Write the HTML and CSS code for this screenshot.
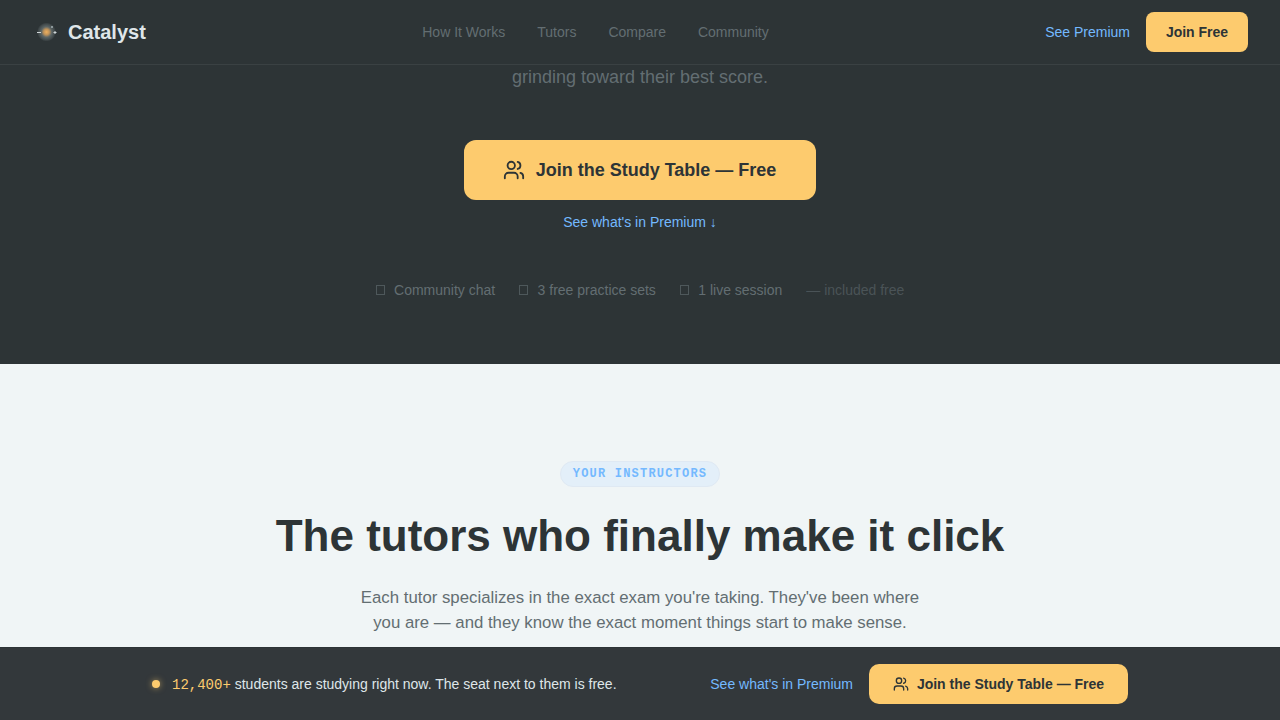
FILE: index.html
```html
<!DOCTYPE html>
<html lang="en">
<head>
  <meta charset="UTF-8">
  <title>Catalyst</title>
  <link rel="stylesheet" href="styles.css">
</head>
<body>
  <nav class="nav">
    <a class="brand" href="#">
      <svg class="brand-logo" width="22" height="22" viewBox="0 0 22 22">
        <defs>
          <radialGradient id="core">
            <stop offset="0" stop-color="#efb05e"/>
            <stop offset="0.3" stop-color="#c0935a"/>
            <stop offset="0.55" stop-color="#5d6666"/>
            <stop offset="0.85" stop-color="#41494b"/>
            <stop offset="1" stop-color="#2d3436"/>
          </radialGradient>
        </defs>
        <circle cx="10.5" cy="11" r="9.5" fill="url(#core)"/>
        <path d="M1 11.5h4M17.5 11.5h3M19 10v3" stroke="#cfd6d8" stroke-width="1" fill="none"/>
        <rect x="15" y="5" width="2" height="2" fill="#8d989b"/>
      </svg>
      <span>Catalyst</span>
    </a>
    <div class="nav-links">
      <a href="#">How It Works</a>
      <a href="#">Tutors</a>
      <a href="#">Compare</a>
      <a href="#">Community</a>
    </div>
    <div class="nav-actions">
      <a class="link-blue" href="#">See Premium</a>
      <a class="btn btn-nav" href="#">Join Free</a>
    </div>
  </nav>

  <section class="hero">
    <p class="hero-sub">grinding toward their best score.</p>
    <a class="btn btn-hero" href="#">
      <svg width="22" height="22" viewBox="0 0 24 24" fill="none" stroke="currentColor" stroke-width="2" stroke-linecap="round" stroke-linejoin="round"><path d="M16 21v-2a4 4 0 0 0-4-4H6a4 4 0 0 0-4 4v2"/><circle cx="9" cy="7" r="4"/><path d="M22 21v-2a4 4 0 0 0-3-3.87"/><path d="M16 3.13a4 4 0 0 1 0 7.75"/></svg>
      Join the Study Table — Free
    </a>
    <a class="link-blue hero-link" href="#">See what's in Premium ↓</a>
    <ul class="perks">
      <li><span class="perk-box"></span>Community chat</li>
      <li><span class="perk-box"></span>3 free practice sets</li>
      <li><span class="perk-box"></span>1 live session</li>
      <li class="perk-note">— included free</li>
    </ul>
  </section>

  <section class="tutors">
    <span class="badge">YOUR INSTRUCTORS</span>
    <h2>The tutors who finally make it click</h2>
    <p>Each tutor specializes in the exact exam you're taking. They've been where you are — and they know the exact moment things start to make sense.</p>
  </section>

  <div class="sticky-bar">
    <div class="sticky-text">
      <span class="dot"></span>
      <span><span class="count">12,400+</span> students are studying right now. The seat next to them is free.</span>
    </div>
    <div class="sticky-actions">
      <a class="link-blue" href="#">See what's in Premium</a>
      <a class="btn btn-sticky" href="#">
        <svg width="16" height="16" viewBox="0 0 24 24" fill="none" stroke="currentColor" stroke-width="2" stroke-linecap="round" stroke-linejoin="round"><path d="M16 21v-2a4 4 0 0 0-4-4H6a4 4 0 0 0-4 4v2"/><circle cx="9" cy="7" r="4"/><path d="M22 21v-2a4 4 0 0 0-3-3.87"/><path d="M16 3.13a4 4 0 0 1 0 7.75"/></svg>
        Join the Study Table — Free
      </a>
    </div>
  </div>
</body>
</html>
```

FILE: styles.css
```css
* { box-sizing: border-box; }
html, body { height: 100%; }
body { margin: 0; overflow: hidden; font-family: "Liberation Sans", Arial, sans-serif; background: #f0f5f6; color: #2d3436; }
a { text-decoration: none; color: inherit; }

.nav { display: flex; align-items: center; justify-content: space-between; height: 65px; padding: 0 32px 0 36px; background: #2d3436; border-bottom: 1px solid #3a4143; }
.brand { display: flex; align-items: center; gap: 10px; font-size: 20px; font-weight: 700; color: #dfe6e9; }
.brand-logo { display: block; }
.nav-links { display: flex; gap: 32px; font-size: 14px; color: #636e72; }
.nav-actions { display: flex; align-items: center; justify-content: flex-end; gap: 16px; font-size: 14px; }
.link-blue { color: #74b9ff; }

.btn { display: flex; align-items: center; justify-content: center; background: #fdcb6e; color: #2d3436; font-weight: 700; }
.btn-nav { width: 102px; height: 40px; border-radius: 8px; font-size: 14px; }

.hero { display: flex; flex-direction: column; align-items: center; height: 299px; background: #2d3436; }
.hero-sub { margin: 0; font-size: 18px; line-height: 25px; color: #636e72; }
.btn-hero { width: 352px; height: 60px; margin-top: 50px; padding-right: 1px; gap: 11px; border-radius: 12px; font-size: 18px; }
.hero-link { margin-top: 14px; font-size: 14px; line-height: 16px; }
.perks { display: flex; gap: 24px; margin: 52px 0 0; padding: 0; list-style: none; font-size: 14px; line-height: 16px; color: #636e72; }
.perks li { display: flex; align-items: center; }
.perk-box { width: 9px; height: 10px; margin-right: 9.4px; border: 1px solid #4e585b; }
.perk-note { opacity: 0.55; }

.tutors { display: flex; flex-direction: column; align-items: center; padding-top: 97px; text-align: center; }
.badge { width: 160px; height: 26px; border: 1px solid #dfe9f3; border-radius: 13px; background: #e3eff9; font-family: "Liberation Mono", monospace; font-size: 12px; font-weight: 700; line-height: 24px; letter-spacing: 1.2px; color: #74b9ff; }
.tutors h2 { margin: 22px 0 0; font-size: 44px; line-height: 53px; font-weight: 700; color: #2d3436; }
.tutors p { width: 560px; margin: 23px 0 0; font-size: 16.8px; line-height: 25px; color: #636e72; }

.sticky-bar { position: fixed; left: 0; right: 0; bottom: 0; display: flex; align-items: center; justify-content: space-between; height: 73px; padding: 0 152px; background: #33383b; border-top: 1px solid #2d3436; }
.sticky-text { display: flex; align-items: center; gap: 12px; font-size: 14px; color: #dfe6e9; }
.dot { width: 8px; height: 8px; border-radius: 50%; background: #fdcb6e; box-shadow: 0 0 6px rgba(253, 203, 110, 0.6); }
.count { font-family: "Liberation Mono", monospace; color: #fdcb6e; }
.sticky-actions { display: flex; align-items: center; gap: 16px; font-size: 14px; }
.btn-sticky { width: 259px; height: 40px; gap: 8px; border-radius: 10px; }
```
